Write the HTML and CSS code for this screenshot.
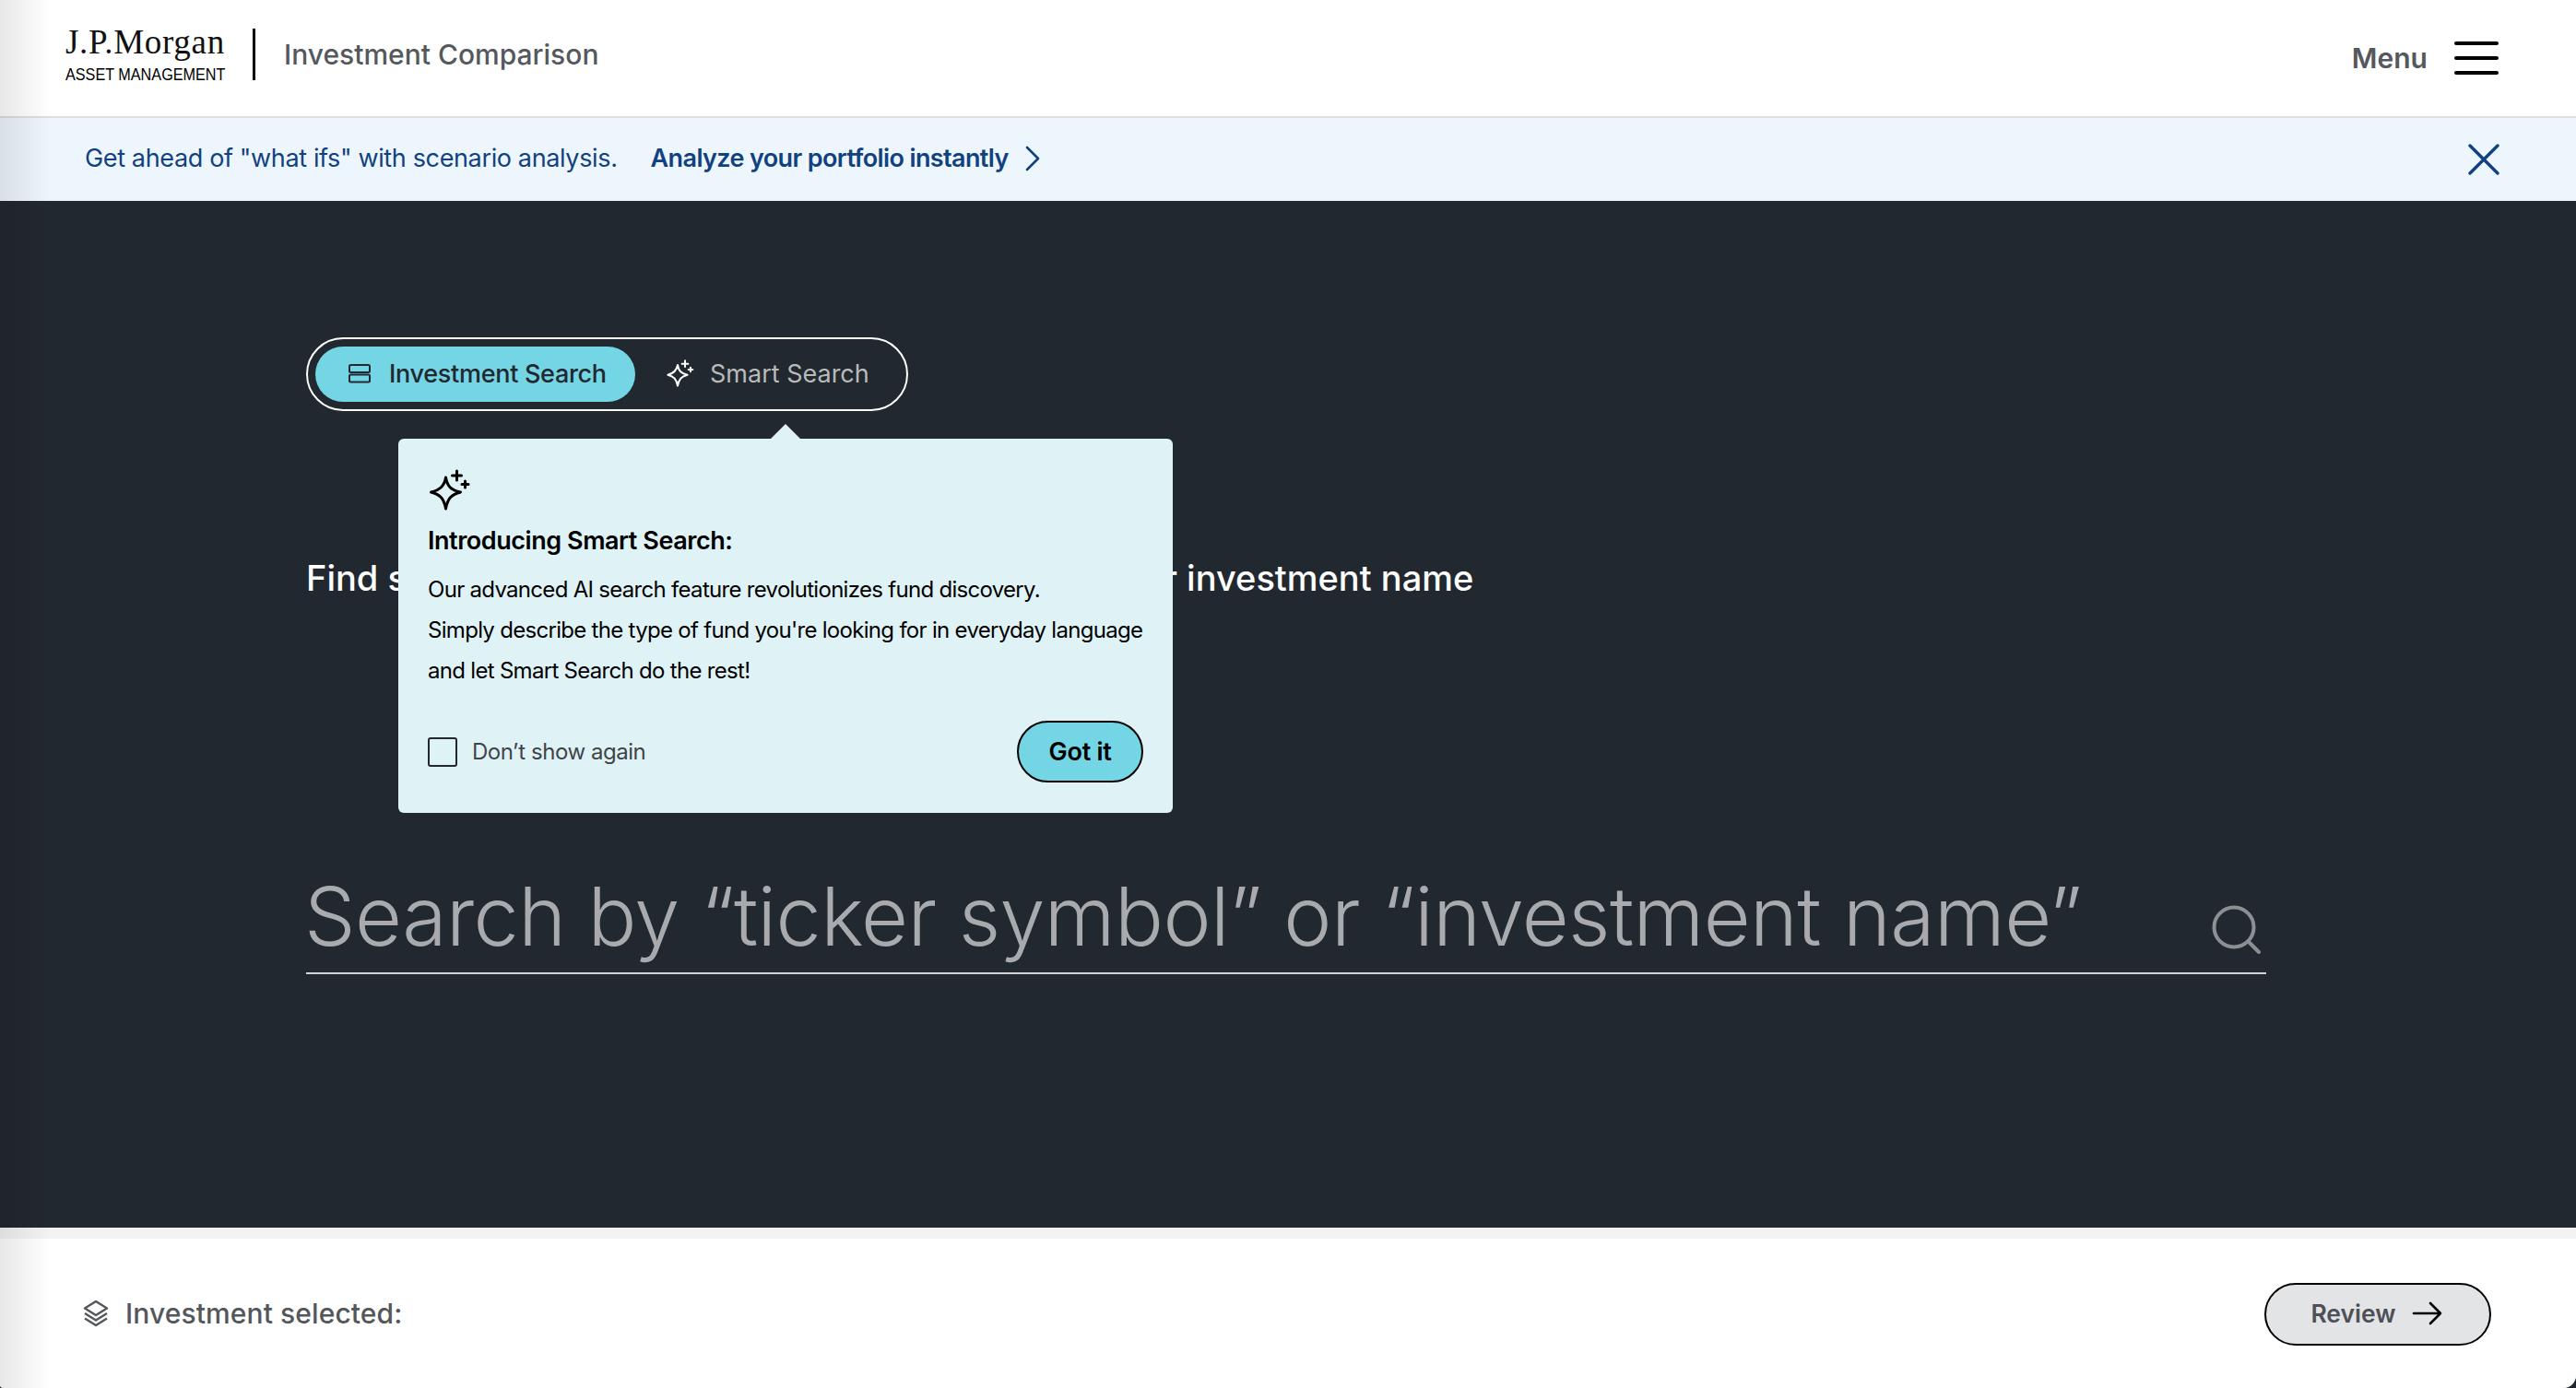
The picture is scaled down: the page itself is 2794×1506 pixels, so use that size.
FILE: index.html
```html
<!DOCTYPE html>
<html lang="en">
<head>
    <meta charset="UTF-8">
    <meta name="viewport" content="width=device-width, initial-scale=1.0">
    <title>Investment Comparison</title>
    <link rel="stylesheet" href="styles.css">
</head>
<body>
    <!-- Header -->
    <header class="site-header">
        <div class="brand">
            <div class="logo">
                <span class="logo-name">J.P.Morgan</span>
                <span class="logo-sub">ASSET MANAGEMENT</span>
            </div>
            <span class="brand-title">Investment Comparison</span>
        </div>
        <div class="menu">
            <span>Menu</span>
            <span class="hamburger"><i></i><i></i><i></i></span>
        </div>
    </header>

    <!-- Promo Banner -->
    <div class="banner">
        <div class="banner-text">
            <span>Get ahead of "what ifs" with scenario analysis.</span>
            <a class="banner-link" href="#">Analyze your portfolio instantly
                <svg width="16" height="28" viewBox="0 0 16 28"><path d="M2 2l12 12L2 26" fill="none" stroke="#11427f" stroke-width="2.6" stroke-linecap="round" stroke-linejoin="round"/></svg>
            </a>
        </div>
        <svg width="34" height="34" viewBox="0 0 34 34"><path d="M2 2l30 30M32 2L2 32" fill="none" stroke="#11427f" stroke-width="3.4" stroke-linecap="round"/></svg>
    </div>

    <!-- Search Section -->
    <main class="search-section">
        <div class="search-toggle">
            <div class="toggle-option active">
                <svg width="26" height="22" viewBox="0 0 26 22"><g fill="none" stroke="#22282f" stroke-width="2"><rect x="2" y="2" width="22" height="8" rx="1.5"/><rect x="2" y="12.500" width="22" height="8" rx="1.5"/></g></svg>
                Investment Search
            </div>
            <div class="toggle-option">
                <svg width="30" height="30" viewBox="0 0 45 45"><use href="#sparkle" stroke="#fff"/></svg>
                Smart Search
            </div>
        </div>

        <p class="search-hint">Find securities by simply entering a ticker symbol or investment name</p>

        <div class="search-field">
            <span class="search-placeholder">Search by “ticker symbol” or “investment name”</span>
            <svg class="search-icon" width="54" height="54" viewBox="0 0 54 54"><g fill="none" stroke="#8c9093" stroke-width="4" stroke-linecap="round"><circle cx="24" cy="24" r="21.500"/><path d="M40 40l11 11"/></g></svg>
        </div>

        <!-- Smart Search Popup -->
        <div class="popup">
            <svg class="popup-icon" width="46" height="45" viewBox="0 0 45 45">
                <g id="sparkle" fill="none" stroke-width="3" stroke-linecap="round" stroke-linejoin="round">
                    <path d="M18 9c1.500 9 5 13.500 16 16-10 2.500-14 7-16 18-2-11-6-15.500-16-18 10-2.500 14.500-7 16-16z"/>
                    <path d="M30 2v10M25 7h10M39 13v7M35.500 16.500h7"/>
                </g>
            </svg>
            <h2>Introducing Smart Search:</h2>
            <p>Our advanced AI search feature revolutionizes fund discovery.<br>
            Simply describe the type of fund you're looking for in everyday language<br>
            and let Smart Search do the rest!</p>
            <div class="popup-footer">
                <label class="popup-check"><span class="checkbox"></span>Don’t show again</label>
                <button class="got-it">Got it</button>
            </div>
        </div>
    </main>

    <!-- Selection Footer -->
    <footer class="selection-bar">
        <div class="selection-label">
            <svg width="28" height="30" viewBox="0 0 28 30"><g fill="none" stroke="#53575c" stroke-width="2.400" stroke-linejoin="round"><path d="M14 2l12 7.500-12 7.500L2 9.500z"/><path d="M2 15l12 7.500L26 15"/><path d="M2 20.500L14 28l12-7.500"/></g></svg>
            Investment selected:
        </div>
        <button class="review">Review
            <svg width="34" height="26" viewBox="0 0 34 26"><path d="M2 13h29M20 2l11 11-11 11" fill="none" stroke="#000" stroke-width="2.600" stroke-linecap="round" stroke-linejoin="round"/></svg>
        </button>
    </footer>
</body>
</html>
```

FILE: styles.css
```css
/* General Styling */
html {
    background-color: #22282f;
}

body {
    font-family: Inter, "Liberation Sans", sans-serif;
    margin: 0;
    height: 1506px;
    display: flex;
    flex-direction: column;
    overflow: hidden;
    position: relative;
    background-color: #f3f3f3;
    border-bottom-right-radius: 14px;
    border-bottom-left-radius: 4px;
}

/* Soft shade along the left edge */
body::after {
    content: "";
    position: absolute;
    top: 0;
    bottom: 0;
    left: 0;
    width: 56px;
    background: linear-gradient(to right, rgba(0, 0, 0, 0.09), rgba(0, 0, 0, 0));
    pointer-events: none;
}

/* Header */
.site-header {
    height: 128px;
    flex: none;
    box-sizing: border-box;
    display: flex;
    justify-content: space-between;
    align-items: center;
    padding: 0 84px 0 71px;
    background-color: #ffffff;
    border-bottom: 2px solid #dcdee0;
}

.brand {
    display: flex;
    align-items: center;
    margin-top: -8px;
}

.logo {
    width: 173px;
    height: 56px;
    display: flex;
    flex-direction: column;
    padding-right: 30px;
    border-right: 3px solid #000;
}

.logo-name {
    margin-top: 2px;
    font-family: "Liberation Serif", serif;
    font-size: 37px;
    line-height: 26px;
    letter-spacing: 0.7px;
    color: #111;
    white-space: nowrap;
}

.logo-sub {
    margin-top: 13px;
    font-family: "Liberation Sans", sans-serif;
    font-size: 18px;
    line-height: 18px;
    color: #000;
    white-space: nowrap;
    transform: scaleX(0.9);
    transform-origin: left center;
}

.brand-title {
    margin-left: 31px;
    font-size: 30px;
    font-weight: 500;
    color: #55585c;
}

.menu {
    display: flex;
    align-items: center;
    gap: 29px;
    font-size: 30px;
    font-weight: 600;
    color: #55585c;
}

.hamburger {
    width: 48px;
    display: flex;
    flex-direction: column;
    gap: 12px;
}

.hamburger i {
    display: block;
    height: 4px;
    border-radius: 2px;
    background-color: #000;
}

/* Banner */
.banner {
    height: 90px;
    flex: none;
    display: flex;
    justify-content: space-between;
    align-items: center;
    padding: 0 83px 0 92px;
    background-color: #eef6fd;
    color: #11427f;
    font-size: 27px;
}

.banner-text {
    display: flex;
    align-items: center;
    gap: 36px;
    letter-spacing: -0.36px;
    padding-bottom: 3px;
}

.banner-link {
    display: flex;
    align-items: center;
    gap: 18px;
    color: #11427f;
    font-weight: 600;
    letter-spacing: -0.62px;
    text-decoration: none;
}

/* Search Section */
.search-section {
    position: relative;
    height: 1114px;
    flex: none;
    box-sizing: border-box;
    padding: 148px 336px 0 332px;
    background-color: #22282f;
}

.search-toggle {
    display: inline-flex;
    box-sizing: border-box;
    width: 653px;
    height: 80px;
    padding: 8px;
    border: 2px solid #fff;
    border-radius: 40px;
    align-items: center;
    vertical-align: top;
}

.toggle-option {
    display: flex;
    align-items: center;
    gap: 17px;
    padding-bottom: 2px;
    font-size: 27px;
    color: #b8babc;
}

.toggle-option.active {
    width: 347px;
    height: 60px;
    box-sizing: border-box;
    padding-left: 35px;
    margin-right: 34px;
    gap: 19px;
    border-radius: 30px;
    background-color: #74d5e4;
    color: #22282f;
    font-weight: 500;
    letter-spacing: -0.3px;
}

.search-hint {
    margin: 156px 0 0;
    font-size: 38px;
    line-height: 50px;
    font-weight: 500;
    color: #ffffff;
}

.search-field {
    margin-top: 282px;
    height: 123px;
    box-sizing: border-box;
    border-bottom: 2px solid #d3d5d6;
    display: flex;
    justify-content: space-between;
}

.search-placeholder {
    margin: 6px 0 0 -2px;
    font-size: 88px;
    line-height: 108px;
    font-weight: 300;
    letter-spacing: -0.6px;
    color: #a8aaad;
    white-space: nowrap;
}

.search-icon {
    margin: 48px 5px 0 0;
}

/* Popup */
.popup {
    position: absolute;
    left: 432px;
    top: 258px;
    width: 840px;
    height: 406px;
    box-sizing: border-box;
    padding: 33px 32px 0;
    border-radius: 6px;
    background-color: #dff3f7;
    color: #000;
}

.popup::before {
    content: "";
    position: absolute;
    top: -16px;
    left: 404px;
    border-left: 16px solid transparent;
    border-right: 16px solid transparent;
    border-bottom: 16px solid #dff3f7;
}

.popup-icon {
    display: block;
    margin-left: 1px;
    stroke: #000;
}

.popup h2 {
    margin: 13px 0 0;
    font-size: 27px;
    line-height: 40px;
    font-weight: 600;
    letter-spacing: -0.45px;
}

.popup p {
    margin: 11px 0 0;
    font-size: 24px;
    line-height: 44px;
    letter-spacing: -0.7px;
    white-space: nowrap;
}

.popup-footer {
    margin-top: 32px;
    display: flex;
    justify-content: space-between;
    align-items: center;
}

.popup-check {
    display: flex;
    align-items: center;
    gap: 16px;
    font-size: 24px;
    letter-spacing: -0.45px;
    color: #3f444a;
}

.checkbox {
    width: 32px;
    height: 32px;
    box-sizing: border-box;
    border: 2px solid #22282f;
    border-radius: 3px;
}

.got-it {
    width: 137px;
    height: 67px;
    padding: 0;
    font-family: inherit;
    font-size: 27px;
    font-weight: 600;
    letter-spacing: -0.3px;
    color: #000;
    background-color: #74d5e4;
    border: 2px solid #000;
    border-radius: 34px;
}

/* Selection Bar */
.selection-bar {
    flex: 1;
    margin-top: 12px;
    display: flex;
    justify-content: space-between;
    align-items: center;
    padding: 0 92px 0 90px;
    background-color: #ffffff;
}

.selection-label {
    display: flex;
    align-items: center;
    gap: 18px;
    font-size: 30px;
    font-weight: 500;
    letter-spacing: 0.1px;
    color: #53575c;
}

.review {
    width: 246px;
    height: 68px;
    margin-top: 2px;
    padding: 0 2px 2px 0;
    display: flex;
    justify-content: center;
    align-items: center;
    gap: 17px;
    font-family: inherit;
    font-size: 26.5px;
    font-weight: 600;
    color: #4d5157;
    background-color: #e3e4e6;
    border: 2px solid #000;
    border-radius: 34px;
}
```
